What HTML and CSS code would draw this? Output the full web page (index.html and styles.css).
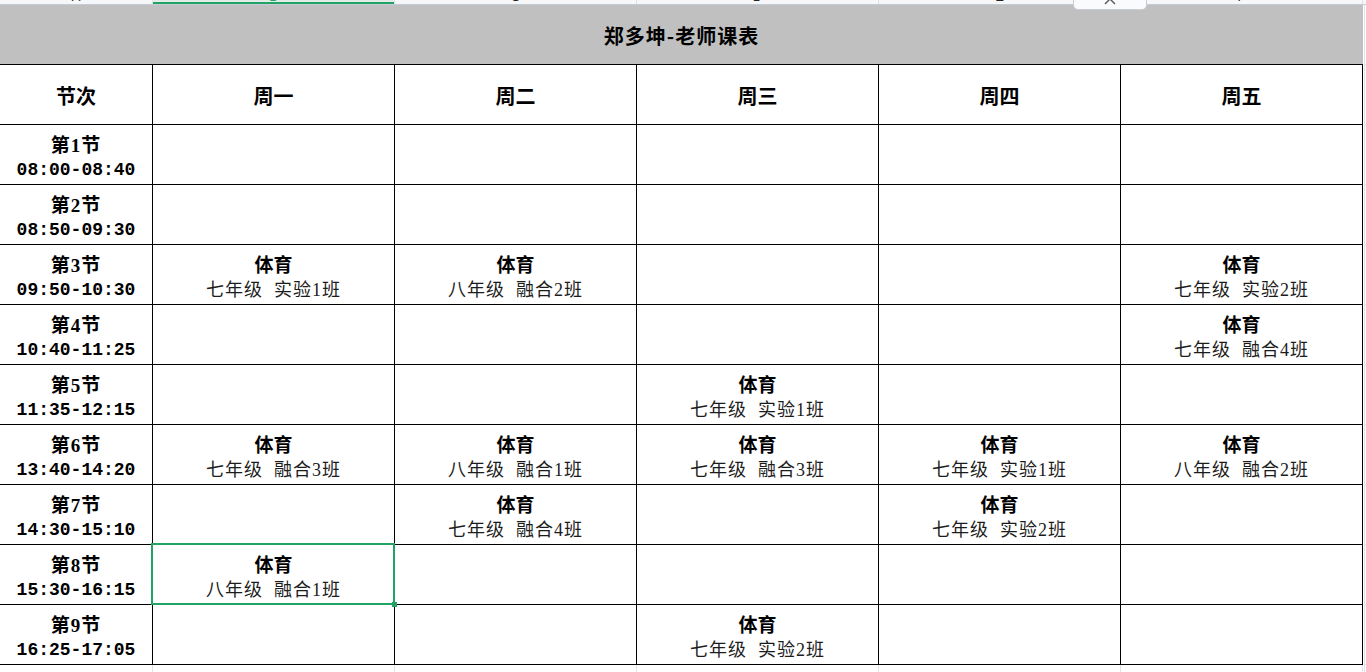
FILE: index.html
```html
<!DOCTYPE html>
<html lang="zh-CN">
<head>
<meta charset="utf-8">
<title>郑多坤-老师课表</title>
<link rel="stylesheet" href="styles.css">
</head>
<body>
<div class="sheet">
  <div class="colhead">
    <div class="ch"><span>A</span></div>
    <div class="ch active"><span>B</span></div>
    <div class="ch"><span>C</span></div>
    <div class="ch"><span>D</span></div>
    <div class="ch"><span>E</span></div>
    <div class="ch"><span>F</span></div>
    <div class="ch filler"></div>
  </div>
  <div class="tab-toggle"><svg width="14" height="8" viewBox="0 0 14 8"><path d="M2 7 L7 2 L12 7" fill="none" stroke="#555" stroke-width="1.4"/></svg></div>

  <div class="grid">
    <div class="title">郑多坤-老师课表</div>
    <div class="gap"></div>

    <div class="cell head">节次</div>
    <div class="cell head">周一</div>
    <div class="cell head">周二</div>
    <div class="cell head">周三</div>
    <div class="cell head">周四</div>
    <div class="cell head">周五</div>
    <div class="gap"></div>

    <div class="cell period"><b>第1节</b><span class="time">08:00-08:40</span></div>
    <div class="cell"></div><div class="cell"></div><div class="cell"></div><div class="cell"></div><div class="cell"></div>
    <div class="gap"></div>

    <div class="cell period"><b>第2节</b><span class="time">08:50-09:30</span></div>
    <div class="cell"></div><div class="cell"></div><div class="cell"></div><div class="cell"></div><div class="cell"></div>
    <div class="gap"></div>

    <div class="cell period"><b>第3节</b><span class="time">09:50-10:30</span></div>
    <div class="cell"><b>体育</b><span class="cls">七年级  实验1班</span></div>
    <div class="cell"><b>体育</b><span class="cls">八年级  融合2班</span></div>
    <div class="cell"></div>
    <div class="cell"></div>
    <div class="cell"><b>体育</b><span class="cls">七年级  实验2班</span></div>
    <div class="gap"></div>

    <div class="cell period"><b>第4节</b><span class="time">10:40-11:25</span></div>
    <div class="cell"></div><div class="cell"></div><div class="cell"></div><div class="cell"></div>
    <div class="cell"><b>体育</b><span class="cls">七年级  融合4班</span></div>
    <div class="gap"></div>

    <div class="cell period"><b>第5节</b><span class="time">11:35-12:15</span></div>
    <div class="cell"></div><div class="cell"></div>
    <div class="cell"><b>体育</b><span class="cls">七年级  实验1班</span></div>
    <div class="cell"></div><div class="cell"></div>
    <div class="gap"></div>

    <div class="cell period"><b>第6节</b><span class="time">13:40-14:20</span></div>
    <div class="cell"><b>体育</b><span class="cls">七年级  融合3班</span></div>
    <div class="cell"><b>体育</b><span class="cls">八年级  融合1班</span></div>
    <div class="cell"><b>体育</b><span class="cls">七年级  融合3班</span></div>
    <div class="cell"><b>体育</b><span class="cls">七年级  实验1班</span></div>
    <div class="cell"><b>体育</b><span class="cls">八年级  融合2班</span></div>
    <div class="gap"></div>

    <div class="cell period"><b>第7节</b><span class="time">14:30-15:10</span></div>
    <div class="cell"></div>
    <div class="cell"><b>体育</b><span class="cls">七年级  融合4班</span></div>
    <div class="cell"></div>
    <div class="cell"><b>体育</b><span class="cls">七年级  实验2班</span></div>
    <div class="cell"></div>
    <div class="gap"></div>

    <div class="cell period"><b>第8节</b><span class="time">15:30-16:15</span></div>
    <div class="cell selected"><b>体育</b><span class="cls">八年级  融合1班</span></div>
    <div class="cell"></div><div class="cell"></div><div class="cell"></div><div class="cell"></div>
    <div class="gap"></div>

    <div class="cell period"><b>第9节</b><span class="time">16:25-17:05</span></div>
    <div class="cell"></div><div class="cell"></div>
    <div class="cell"><b>体育</b><span class="cls">七年级  实验2班</span></div>
    <div class="cell"></div><div class="cell"></div>
    <div class="gap"></div>

    <div class="blank"></div><div class="blank"></div><div class="blank"></div><div class="blank"></div><div class="blank"></div><div class="blank"></div><div class="gap"></div>
  </div>
</div>
</body>
</html>
```

FILE: styles.css
```css
html, body {
  margin: 0;
  padding: 0;
  background: #ffffff;
  overflow: hidden;
}

.sheet {
  position: relative;
  width: 1366px;
  height: 672px;
  overflow: hidden;
  font-family: "Noto Sans CJK SC", "Noto Sans", sans-serif;
  color: #000;
}

.colhead {
  display: grid;
  grid-template-columns: 153px repeat(5, 242px) 1fr;
  height: 4px;
  background: #f6f7f9;
  border-bottom: 1px solid #c5ccd8;
}

.ch {
  position: relative;
  overflow: hidden;
  text-align: center;
  border-right: 1px solid #dde1e8;
  font-family: "Liberation Sans", sans-serif;
  font-size: 13px;
  line-height: 13px;
  color: #222;
}

.ch span {
  display: block;
  margin-top: -10px;
}

.ch.active {
  background: #e4ece8;
  box-shadow: inset 0 -2px 0 #21a366;
  color: #21a366;
}

.ch.filler {
  border-right: none;
}

.tab-toggle {
  position: absolute;
  left: 1073px;
  top: -5px;
  width: 72px;
  height: 13px;
  background: #fafbfc;
  border: 1px solid #c9ced6;
  border-radius: 0 0 5px 5px;
  display: flex;
  justify-content: center;
  align-items: flex-start;
}

.tab-toggle svg {
  margin-top: 1px;
}

.grid {
  display: grid;
  grid-template-columns: 153px repeat(5, 242px) 1fr;
  grid-auto-rows: 60px;
}

.title {
  grid-column: 1 / 7;
  background: #c0c0c0;
  border-bottom: 1px solid #000;
  display: flex;
  align-items: center;
  justify-content: center;
  padding-top: 1px;
  box-sizing: border-box;
  font-size: 20px;
  font-weight: 700;
  letter-spacing: 1px;
}

.gap {
  border-bottom: 1px solid #dfe3ea;
  border-left: 1px solid #dfe3ea;
  margin-left: 1px;
}

.cell {
  position: relative;
  box-sizing: border-box;
  border-right: 1px solid #000;
  border-bottom: 1px solid #000;
  display: flex;
  flex-direction: column;
  align-items: center;
  justify-content: center;
  padding-top: 6px;
  line-height: 24px;
  white-space: pre;
}

.cell.head {
  padding-top: 3px;
  font-size: 20px;
  font-weight: 700;
}

.cell b {
  font-size: 19px;
  font-weight: 700;
  font-family: "Liberation Serif", "Noto Sans CJK SC", serif;
}

.cell.period b {
  letter-spacing: 1px;
}

.cell .cls {
  font-size: 18px;
  font-weight: 400;
  letter-spacing: 1px;
  color: #1c1c1c;
  font-family: "Liberation Serif", "Noto Sans CJK SC", serif;
}

.cell .time {
  font-family: "Liberation Mono", "DejaVu Sans Mono", monospace;
  font-size: 18px;
  font-weight: 700;
}

.cell.selected {
  z-index: 2;
}

.cell.selected::after {
  content: "";
  position: absolute;
  left: -2px;
  top: -2px;
  right: -1px;
  bottom: -1px;
  border: 2px solid #21a366;
  pointer-events: none;
}

.cell.selected::before {
  content: "";
  position: absolute;
  right: -3px;
  bottom: -3px;
  width: 5px;
  height: 5px;
  background: #21a366;
  z-index: 1;
}

.blank {
  border-right: 1px solid #dfe3ea;
}
```
